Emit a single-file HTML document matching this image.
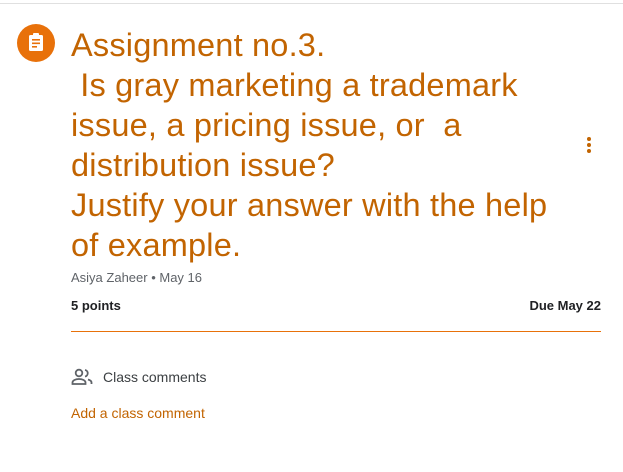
<!DOCTYPE html>
<html><head><style>
body{margin:0;width:623px;height:472px;background:#fff;font-family:"Liberation Sans",sans-serif;position:relative;overflow:hidden}
.top{position:absolute;left:0;right:0;top:3px;height:1px;background:#e0e0e0}
.ic{position:absolute;left:17px;top:24px;width:38px;height:38px;border-radius:50%;background:#e8710a}
.title{position:absolute;left:71px;top:25px;font-size:32.5px;line-height:40px;color:#c26401;white-space:pre;letter-spacing:0.2px}
.meta{position:absolute;left:71px;top:270px;font-size:13px;color:#5f6368}
.pts{position:absolute;left:71px;top:298px;font-size:13px;color:#202124;font-weight:bold}
.due{position:absolute;right:22px;top:298px;font-size:13px;color:#202124;font-weight:bold}
.hr{position:absolute;left:71px;width:530px;top:331px;height:1px;background:#e8710a}
.cc{position:absolute;left:103px;top:369px;font-size:14px;color:#3c4043}
.add{position:absolute;left:71px;top:405px;font-size:14px;color:#c26401}
.dots{position:absolute;left:587px;top:137px}
.dots i{display:block;width:4px;height:4px;border-radius:50%;background:#c26401;margin-bottom:2px}
</style></head><body>
<div class="top"></div>
<div class="ic"><svg width="38" height="38" viewBox="0 0 38 38"><rect x="12" y="11" width="14" height="16" rx="1.5" fill="#fff"/><rect x="16" y="9" width="6" height="4" rx="1" fill="#fff"/><rect x="15" y="15" width="8" height="1.6" fill="#e8710a"/><rect x="15" y="18.5" width="8" height="1.6" fill="#e8710a"/><rect x="15" y="22" width="5" height="1.6" fill="#e8710a"/></svg></div>
<div class="title">Assignment no.3.
 Is gray marketing a trademark
issue, a pricing issue, or  a
distribution issue?
Justify your answer with the help
of example.</div>
<div class="dots"><i></i><i></i><i></i></div>
<div class="meta">Asiya Zaheer • May 16</div>
<div class="pts">5 points</div>
<div class="due">Due May 22</div>
<div class="hr"></div>
<svg style="position:absolute;left:71px;top:368px" width="22" height="18" viewBox="0 0 22 18"><circle cx="8" cy="5" r="3.3" fill="none" stroke="#5f6368" stroke-width="1.8"/><path d="M14 2a3.3 3.3 0 0 1 0 6.5" fill="none" stroke="#5f6368" stroke-width="1.8"/><path d="M1.5 16v-1.5c0-2 3-3.5 6.5-3.5s6.5 1.5 6.5 3.5V16z" fill="none" stroke="#5f6368" stroke-width="1.8"/><path d="M17 11.5c2 .6 3.5 1.6 3.5 3V16" fill="none" stroke="#5f6368" stroke-width="1.8"/></svg>
<div class="cc">Class comments</div>
<div class="add">Add a class comment</div>
</body></html>
